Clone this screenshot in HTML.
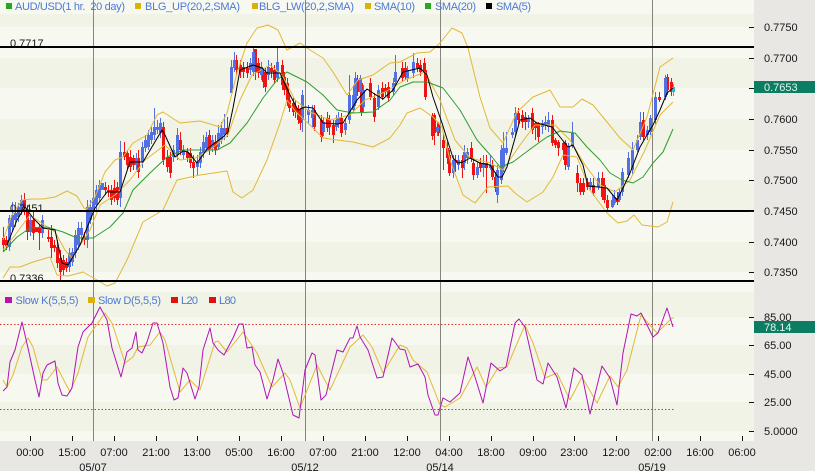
<!DOCTYPE html>
<html><head><meta charset="utf-8"><title>AUD/USD chart</title>
<style>
html,body{margin:0;padding:0;width:815px;height:471px;overflow:hidden;background:#e9e7e4}
svg{display:block;font-family:"Liberation Sans",sans-serif;font-size:11px}
.b{fill:none;stroke:#e3b838;stroke-width:1;stroke-linejoin:round}
.lg{fill:#4d78d6}
.ax{fill:#161616}
</style></head><body>
<svg width="815" height="471" viewBox="0 0 815 471" xmlns="http://www.w3.org/2000/svg">
<rect width="815" height="471" fill="#e9e7e4"/>
<!-- stripes -->
<rect x="0" y="0" width="754" height="441" fill="#f7f9f1"/>
<g fill="#f0f3e6">
<rect x="0" y="14" width="754" height="13"/>
<rect x="0" y="58" width="754" height="30"/>
<rect x="0" y="119" width="754" height="31"/>
<rect x="0" y="180" width="754" height="31"/>
<rect x="0" y="242" width="754" height="30"/>
<rect x="0" y="292" width="754" height="25"/>
<rect x="0" y="345" width="754" height="29"/>
<rect x="0" y="402" width="754" height="29"/>
</g>
<!-- vertical lines -->
<g stroke="#85857c" stroke-width="1">
<path d="M93.5 0V441M305.5 0V441M440.5 0V441M652.5 0V441"/>
</g>
<!-- candles -->
<g transform="translate(0.5,0)">
<path fill="none" stroke="#ee1414" stroke-width="1" d="M3 227V252M6 236V250M24 193V215M27 205V240M33 212V240M39 225V250M48 230V242M51 225V258M54 240V252M57 240V268M60 250V280M63 255V275M66 258V272M84 232V245M105 182V195M108 185V197M111 185V205M114 180V202M117 182V205M124 142V160M127 150V170M130 150V172M133 155V170M138 150V178M163 122V165M167 150V172M170 152V178M180 132V155M187 148V162M190 148V168M193 155V178M209 130V155M215 135V155M227 117V137M236 55V75M240 60V78M243 62V78M247 62V78M255 49V80M258 58V78M263 68V88M265 68V92M271 63V78M274 65V84M282 60V90M284 72V95M287 78V106M289 95V112M293 98V116M295 100V118M298 105V124M300 108V130M314 105V131M321 115V142M327 112V132M329 115V135M333 120V143M341 113V137M357 75V96M361 78V116M370 78V100M374 93V122M382 82V100M385 84V96M388 82V102M402 62V82M405 62V80M417 58V72M420 60V76M424 58V78M425 66V100M432 113V140M434 113V145M438 122V136M443 134V170M447 142V164M449 150V176M455 155V172M462 155V178M471 142V162M473 158V180M480 158V172M486 155V193M492 160V180M495 172V192M518 108V124M522 110V128M525 112V130M532 108V134M535 122V140M538 122V142M552 115V146M555 138V148M558 140V156M563 142V160M565 140V170M577 165V192M580 178V195M583 178V195M587 178V190M593 178V196M602 172V200M604 178V203M607 195V210M617 192V205M643 112V140M659 92V102M667 74V95M671 78V96"/>
<path fill="none" stroke="#5270e4" stroke-width="1" d="M9 215V251M12 202V232M15 202V227M18 203V222M21 195V215M30 215V236M42 215V238M69 248V272M72 248V266M75 230V258M78 222V250M81 222V240M87 200V248M90 200V224M93 192V214M96 185V210M99 180V202M120 141V207M136 153V170M142 142V168M145 135V152M148 130V150M151 127V144M154 108V140M157 120V134M160 118V138M173 145V162M177 128V160M183 145V160M197 155V175M200 147V168M203 135V158M206 132V152M212 135V152M218 125V150M221 122V144M224 114V140M231 60V93M234 52V72M250 58V75M253 48V76M261 62V80M268 60V80M277 48V82M302 90V132M308 105V124M312 105V128M323 118V136M336 115V131M338 112V128M345 118V135M349 75V124M353 85V113M355 72V106M360 75V96M363 85V112M378 85V110M393 78V96M395 55V85M407 66V82M413 53V78M437 122V136M453 155V178M458 155V170M464 145V170M467 148V164M477 162V178M483 155V177M490 155V170M497 165V203M501 145V184M503 132V172M506 132V155M512 128V138M515 107V136M528 115V128M542 120V134M545 116V130M548 112V132M568 143V170M572 122V148M590 178V190M598 172V190M612 195V208M614 190V205M619 188V202M622 168V196M628 152V178M632 142V174M637 135V152M640 112V140M647 126V140M650 115V135M655 92V124M665 75V100"/>
<path fill="none" stroke="#ee1414" stroke-width="3" d="M3 238V245M6 240V246M24 200V208M27 210V232M33 220V233M36 227V232M39 228V233M48 237V239M51 237V248M54 245V248M57 247V263M60 258V272M63 260V270M66 262V268M84 237V240M105 187V190M108 190V192M111 190V200M114 188V198M117 187V200M124 152V157M127 153V165M130 157V167M133 158V165M138 158V172M163 127V160M167 157V167M170 157V173M180 140V150M187 152V158M190 153V163M193 162V168M209 135V150M215 142V150M227 128V133M236 60V70M240 65V72M243 67V72M247 68V73M255 49V72M258 63V73M263 72V82M265 73V87M271 68V72M274 70V80M282 65V85M284 77V90M287 83V102M289 100V108M293 103V112M295 108V112M298 110V120M300 112V123M314 110V127M321 120V137M327 118V128M329 120V127M333 125V135M341 118V133M357 80V92M361 83V112M370 83V97M374 98V117M382 88V97M385 88V92M388 87V98M402 68V78M405 68V77M417 63V68M420 65V72M424 63V73M425 70V97M432 116V136M434 115V133M438 124V133M443 140V148M447 148V158M449 155V173M455 160V163M462 160V168M471 148V158M473 163V175M480 163V168M486 163V168M492 165V177M495 177V188M518 113V120M522 115V122M525 117V122M532 113V130M535 123V128M538 123V137M552 120V143M555 140V145M558 142V148M563 143V150M565 143V165M577 173V183M580 183V192M583 183V192M587 182V187M593 185V193M602 178V197M604 185V200M607 200V208M617 198V202M643 120V137M659 97V100M667 77V90M671 82V92"/>
<path fill="none" stroke="#5270e4" stroke-width="3" d="M9 218V247M12 215V227M15 213V220M18 207V217M21 200V210M30 220V232M42 220V233M69 253V267M72 252V262M75 235V253M78 228V245M81 228V235M87 207V240M90 207V220M93 198V210M96 190V205M99 185V198M102 183V190M120 152V198M136 158V165M142 147V162M145 140V148M148 135V147M151 132V140M154 127V135M157 127V130M160 123V133M173 150V157M177 135V155M183 150V155M197 162V167M200 152V163M203 142V153M206 137V148M212 140V148M218 133V147M221 128V140M224 128V135M231 67V93M234 60V68M250 63V70M253 52V72M261 67V75M268 67V75M277 62V78M302 95V120M308 110V115M312 110V118M323 122V132M336 120V127M338 118V123M345 123V130M349 95V120M353 95V110M355 78V103M360 78V92M363 90V107M378 90V107M393 83V92M395 72V82M407 70V78M413 62V73M437 127V132M453 160V173M458 160V165M464 152V163M467 152V158M477 167V175M483 163V168M490 165V168M497 170V195M501 150V180M503 148V167M506 148V153M512 132V135M515 113V132M528 118V122M542 123V127M545 122V125M548 120V127M568 147V167M572 133V145M590 182V187M598 178V187M612 200V207M614 197V203M619 192V200M622 172V192M628 158V175M632 150V170M637 140V150M640 122V137M647 130V135M650 118V132M655 97V120M665 78V97"/>
<path fill="none" stroke="#33b6d6" stroke-width="1" d="M673 84V96"/>
<path fill="none" stroke="#33b6d6" stroke-width="3" d="M673 87V92"/>
</g>
<!-- Bollinger -->
<polyline class="b" points="3,240 12,215 22,200 32,199 43,199 55,197 67,191 77,196 84,208 87,209 95,197 105,172 115,160 123,157 133,143 147,135 157,115 163,112 180,123 200,121 220,127 227,113 237,73 247,43 257,28 268,25 278,30 287,50 300,43 310,50 323,58 333,72 347,95 358,80 373,75 390,63 400,62 417,53 430,52 440,43 452,28 462,33 468,48 480,97 490,128 503,143 517,112 533,97 550,90 560,107 573,107 582,99 593,105 607,122 620,138 633,150 647,117 660,67 673,58"/>
<polyline class="b" points="3,278 10,267 20,267 33,262 50,257 57,275 68,276 83,272 97,280 107,286 115,283 127,260 143,222 163,210 177,180 200,175 227,171 233,192 242,198 253,190 267,160 280,123 287,100 296,112 310,125 323,138 337,140 353,142 373,147 390,138 400,125 407,113 420,108 433,117 442,127 450,160 463,195 475,203 488,187 508,186 515,193 527,202 543,192 553,177 563,155 577,157 590,190 607,213 618,223 627,221 634,215 642,225 658,227 667,222 673,202"/>
<polyline class="b" points="3,250 15,235 30,215 40,222 55,232 65,250 72,258 90,230 100,205 115,195 130,180 145,160 165,145 180,160 195,158 210,150 228,135 240,100 252,75 270,65 282,75 295,100 310,112 330,120 350,115 365,100 385,92 405,80 425,72 440,100 455,140 470,158 490,163 503,170 520,145 535,125 555,125 570,140 585,165 600,185 615,192 630,180 645,150 660,115 673,102"/>
<!-- SMA20 -->
<polyline fill="none" stroke="#2f9c2f" stroke-width="1" stroke-linejoin="round" points="3,252 17,237 30,228 47,227 63,232 77,238 93,238 110,227 123,213 133,190 150,173 167,157 183,150 217,150 230,143 247,123 263,98 277,80 287,72 307,82 323,95 337,110 353,113 373,112 390,100 400,87 413,82 427,82 443,88 460,110 477,140 492,157 500,167 513,162 533,147 547,137 560,131 575,133 587,147 600,160 610,173 622,180 633,183 643,177 653,163 663,152 673,129"/>
<!-- SMA5 -->
<polyline fill="none" stroke="#000" stroke-width="1" stroke-linejoin="round" points="7,245 17,220 25,207 33,218 43,228 55,230 62,263 68,265 80,245 95,208 107,192 120,192 130,162 143,162 162,130 165,135 175,157 183,151 188,152 197,163 208,148 223,137 228,132 233,108 240,70 248,67 253,65 262,68 267,73 280,73 290,95 298,110 305,107 313,108 323,123 337,124 343,123 357,100 367,89 373,93 383,99 393,90 403,72 420,68 427,75 433,97 442,123 453,158 458,163 463,162 470,158 480,163 490,165 498,177 502,177 507,167 520,120 530,118 537,123 552,127 560,137 568,147 573,145 583,165 588,186 598,187 607,188 617,200 623,188 630,173 640,147 647,135 653,125 660,110 667,93 673,88"/>
<!-- stochastic -->
<path d="M0 324.5H674M0 409.5H674" stroke="#d8362c" stroke-width="1" stroke-dasharray="1.5 2" fill="none"/>
<polyline class="b" points="3,380 7,387 13,375 22,347 28,338 33,347 42,380 47,380 57,367 70,392 78,373 88,337 105,313 112,323 125,363 133,357 138,347 150,345 160,332 165,340 180,392 190,380 200,390 215,342 218,341 227,352 243,332 257,353 272,387 285,373 290,380 300,408 317,365 330,390 350,347 363,335 372,347 383,373 400,345 407,348 413,360 427,372 440,405 445,407 460,398 477,367 486,387 498,368 507,367 525,325 533,343 545,378 557,373 570,400 582,377 597,403 610,376 618,387 627,370 641,315 657,333 672,318 674,318"/>
<polyline fill="none" stroke="#b014b4" stroke-width="1" stroke-linejoin="round" points="3,391 7,387 10,362 15,350 22,322 28,348 35,380 39,397 43,373 47,365 55,361 58,383 62,395 67,396 72,388 78,347 83,332 92,323 100,307 107,320 112,348 121,377 127,352 132,348 136,332 138,350 142,353 147,342 153,323 157,323 163,343 170,387 174,400 178,398 183,368 187,373 195,399 199,387 203,350 210,328 213,343 218,350 224,355 233,338 239,324 243,324 247,348 252,347 255,365 260,372 267,399 273,380 278,359 283,373 293,415 299,418 305,370 312,353 315,355 321,400 326,395 330,378 337,350 343,352 350,338 353,338 357,326 360,337 368,350 377,378 383,377 392,338 400,349 405,350 410,367 418,364 425,377 428,395 435,415 438,415 443,398 450,402 460,393 468,357 475,377 483,403 491,363 500,371 506,367 515,323 519,319 525,327 537,380 543,384 548,363 557,377 566,408 574,368 582,375 590,414 602,366 610,378 617,405 623,353 631,314 637,316 641,313 653,337 658,333 667,308 673,327"/>
<!-- level labels -->
<g fill="#161616">
<text x="10" y="47">0.7717</text>
<text x="10" y="212">0.7451</text>
<text x="10" y="282">0.7336</text>
</g>
<!-- horizontal lines -->
<g fill="#000">
<rect x="0" y="46" width="754" height="2"/>
<rect x="0" y="210" width="754" height="2"/>
<rect x="0" y="280" width="754" height="2"/>
</g>
<!-- legends -->
<g>
<rect x="6" y="3" width="6" height="6" fill="#27a81f"/>
<rect x="135" y="3" width="6" height="6" fill="#d9b20c"/>
<rect x="252" y="3" width="6" height="6" fill="#d9b20c"/>
<rect x="365" y="3" width="6" height="6" fill="#d9b20c"/>
<rect x="425" y="3" width="6" height="6" fill="#27a81f"/>
<rect x="486" y="3" width="6" height="6" fill="#000"/>
<rect x="5" y="297" width="7" height="6" fill="#b814b0"/>
<rect x="88" y="297" width="7" height="6" fill="#d9b20c"/>
<rect x="171" y="297" width="7" height="6" fill="#e01010"/>
<rect x="209" y="297" width="7" height="6" fill="#e01010"/>
</g>
<g class="lg">
<text x="15" y="10" textLength="110" xml:space="preserve">AUD/USD(1 hr.  20 day)</text>
<text x="145" y="10" textLength="95">BLG_UP(20,2,SMA)</text>
<text x="259" y="10" textLength="95">BLG_LW(20,2,SMA)</text>
<text x="374" y="10" textLength="41">SMA(10)</text>
<text x="435" y="10" textLength="41">SMA(20)</text>
<text x="496" y="10" textLength="35">SMA(5)</text>
<text x="15.5" y="304" textLength="63">Slow K(5,5,5)</text>
<text x="98" y="304" textLength="63">Slow D(5,5,5)</text>
<text x="181" y="304" textLength="17">L20</text>
<text x="219" y="304" textLength="17">L80</text>
</g>
<!-- right axis -->
<rect x="754" y="0" width="61" height="471" fill="#e9e7e4"/>
<rect x="0" y="441" width="815" height="30" fill="#e9e7e4"/>
<path stroke="#111" stroke-width="1" fill="none" d="M749 27.5H754M749 58.5H754M749 88.5H754M749 119.5H754M749 150.5H754M749 180.5H754M749 211.5H754M749 242.5H754M749 272.5H754M749 317.5H754M749 345.5H754M749 374.5H754M749 402.5H754M749 431.5H754"/>
<path stroke="#111" stroke-width="1" fill="none" d="M30.5 436V441M72.5 436V441M114.5 436V441M156.5 436V441M197.5 436V441M239.5 436V441M281.5 436V441M323.5 436V441M365.5 436V441M407.5 436V441M449.5 436V441M491.5 436V441M533.5 436V441M574.5 436V441M616.5 436V441M658.5 436V441M700.5 436V441M742.5 436V441"/>
<g class="ax">
<text x="764" y="31">0.7750</text>
<text x="764" y="62">0.7700</text>
<text x="764" y="123">0.7600</text>
<text x="764" y="154">0.7550</text>
<text x="764" y="184">0.7500</text>
<text x="764" y="215">0.7450</text>
<text x="764" y="246">0.7400</text>
<text x="764" y="276">0.7350</text>
<text x="764" y="321">85.00</text>
<text x="764" y="349">65.00</text>
<text x="764" y="378">45.00</text>
<text x="764" y="406">25.00</text>
<text x="764" y="435">5.0000</text>
</g>
<rect x="754" y="81" width="61" height="12" fill="#0b7d62"/>
<rect x="754" y="321" width="61" height="12" fill="#0b7d62"/>
<g fill="#e6f5ef">
<text x="764" y="91">0.7653</text>
<text x="764" y="331">78.14</text>
</g>
<g class="ax" text-anchor="middle">
<text x="30" y="456">00:00</text>
<text x="72" y="456">15:00</text>
<text x="114" y="456">07:00</text>
<text x="156" y="456">21:00</text>
<text x="197" y="456">13:00</text>
<text x="239" y="456">05:00</text>
<text x="281" y="456">16:00</text>
<text x="323" y="456">07:00</text>
<text x="365" y="456">21:00</text>
<text x="407" y="456">12:00</text>
<text x="449" y="456">04:00</text>
<text x="491" y="456">18:00</text>
<text x="533" y="456">09:00</text>
<text x="574" y="456">23:00</text>
<text x="616" y="456">12:00</text>
<text x="658" y="456">02:00</text>
<text x="700" y="456">16:00</text>
<text x="742" y="456">06:00</text>
<text x="93" y="471">05/07</text>
<text x="305" y="471">05/12</text>
<text x="440" y="471">05/14</text>
<text x="652" y="471">05/19</text>
</g>
</svg>
</body></html>
